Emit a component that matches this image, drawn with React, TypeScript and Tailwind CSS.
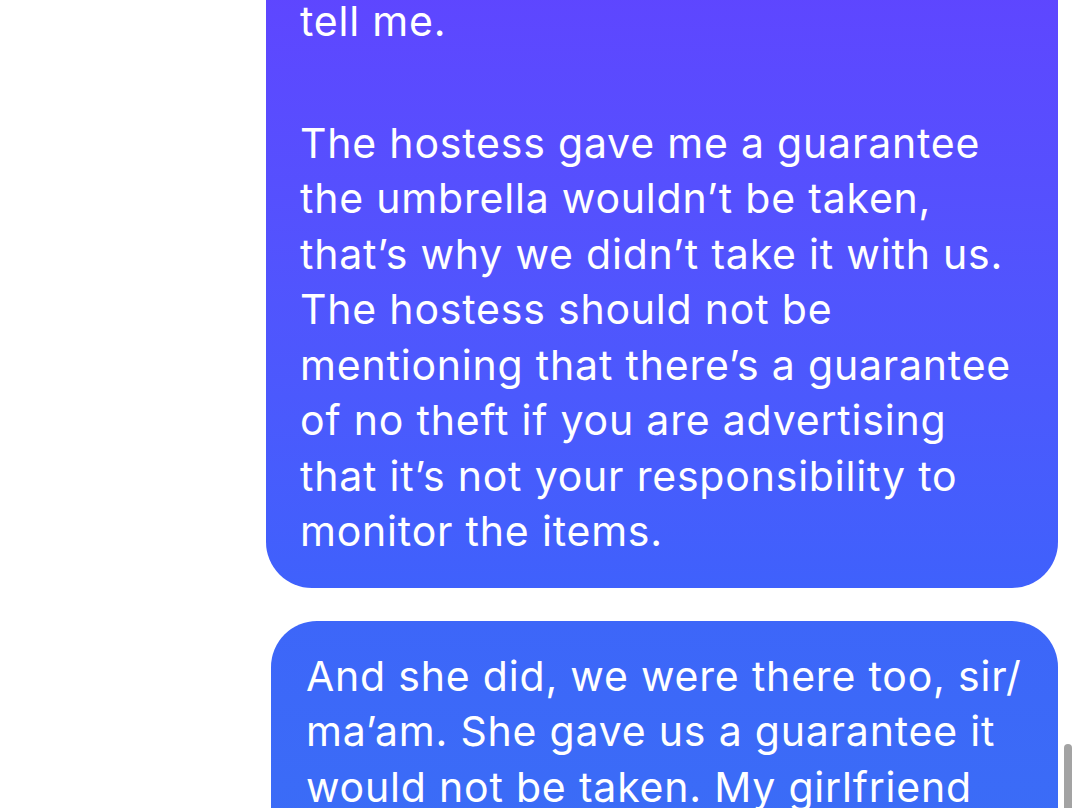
import React from 'react';

const firstLines = [
  'The hostess gave me a guarantee',
  'the umbrella wouldn’t be taken,',
  'that’s why we didn’t take it with us.',
  'The hostess should not be',
  'mentioning that there’s a guarantee',
  'of no theft if you are advertising',
  'that it’s not your responsibility to',
  'monitor the items.',
];

const secondLines = [
  'And she did, we were there too, sir/',
  'ma’am. She gave us a guarantee it',
  'would not be taken. My girlfriend',
];

const App: React.FC = () => {
  return (
    <div
      className="relative h-[808px] w-[1080px] overflow-hidden bg-white text-white"
      style={{ fontFamily: 'Inter, "Noto Sans", sans-serif' }}
    >
      <div className="flex flex-col items-end pr-[22px]">
        {/* Sent bubble, top cut off by scroll */}
        <div className="-mt-[6px] w-[792px] rounded-b-[46px] bg-gradient-to-b from-[#5e46ff] to-[#3f61fc] pl-[34px] pb-[28px] text-[41px] leading-[55.5px] tracking-[0.8px]">
          <div className="whitespace-nowrap">tell me.</div>
          <div className="mt-[66px]">
            {firstLines.map((line) => (
              <div key={line} className="whitespace-nowrap">
                {line}
              </div>
            ))}
          </div>
        </div>

        {/* Next bubble */}
        <div className="mt-[33px] w-[787px] rounded-t-[46px] bg-gradient-to-b from-[#3d66f9] to-[#3a6df6] pl-[35px] pt-[28px] pb-[40px] text-[41px] leading-[55.5px] tracking-[0.8px]">
          {secondLines.map((line) => (
            <div key={line} className="whitespace-nowrap">
              {line}
            </div>
          ))}
        </div>
      </div>

      {/* Scroll indicator */}
      <div className="absolute right-[8px] top-[744px] h-[80px] w-[8px] rounded-full bg-[#a3a3a3]" />
    </div>
  );
};

export default App;
